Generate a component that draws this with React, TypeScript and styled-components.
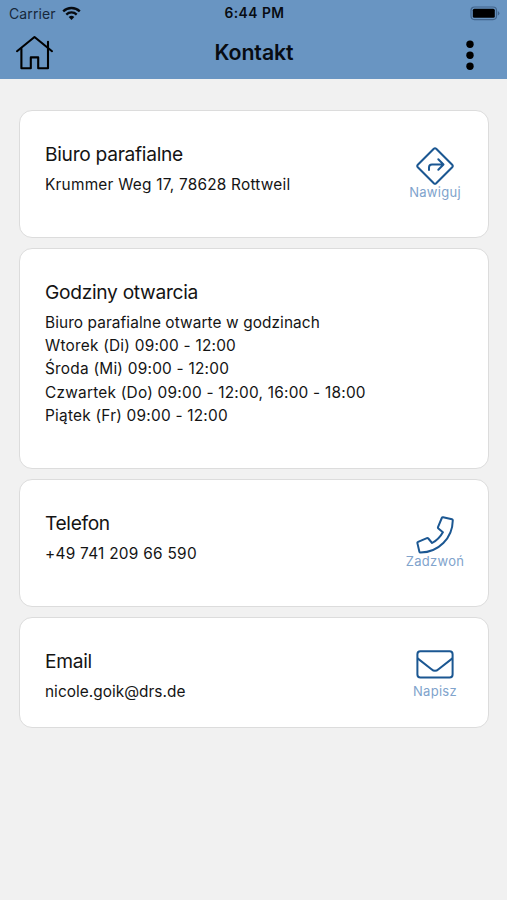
import React from "react";
import styled, { createGlobalStyle } from "styled-components";

const GlobalStyle = createGlobalStyle`
  * { box-sizing: border-box; }
  body {
    margin: 0;
    background: #f1f1f1;
    color: #141414;
    font-family: Inter, "Liberation Sans", sans-serif;
  }
`;

const Screen = styled.div`
  min-height: 900px;
  background: #f1f1f1;
`;

const Header = styled.header`
  height: 79px;
  background: #6995c2;
  color: #080c12;
`;

const StatusBar = styled.div`
  display: grid;
  grid-template-columns: 1fr auto 1fr;
  align-items: center;
  height: 27px;
  padding: 0 7px 0 9px;
`;

const Carrier = styled.div`
  display: flex;
  align-items: center;
  gap: 6px;
  font-size: 14px;
  line-height: 27px;
  letter-spacing: 0.1px;
  color: #17283b;
`;

const Clock = styled.time`
  font-size: 13.8px;
  line-height: 27px;
  font-weight: 600;
  letter-spacing: 0.5px;
`;

const BatterySlot = styled.div`
  display: flex;
  justify-content: flex-end;
`;

const NavBar = styled.div`
  display: grid;
  grid-template-columns: 1fr auto 1fr;
  align-items: start;
  height: 52px;
  padding: 0 32px 0 15px;
`;

const NavTitle = styled.h1`
  margin: 0 0 0 18px;
  font-size: 21.3px;
  line-height: 50px;
  font-weight: 600;
  letter-spacing: -0.1px;
`;

const IconButton = styled.button<{ $end?: boolean }>`
  display: flex;
  margin-top: ${(p) => (p.$end ? 12 : 8)}px;
  padding: 0;
  border: 0;
  background: none;
  color: #000;
  justify-self: ${(p) => (p.$end ? "end" : "start")};
`;

const CardList = styled.main`
  display: flex;
  flex-direction: column;
  gap: 10px;
  padding: 31px 18px 0 19px;
`;

const Card = styled.section<{ $height: number }>`
  display: flex;
  justify-content: space-between;
  height: ${(p) => p.$height}px;
  padding: 31px 22px 0 25px;
  border: 1px solid #dcdcdc;
  border-radius: 13px;
  background: #fff;
`;

const CardTitle = styled.h2<{ $tracking?: number }>`
  margin: 0 0 6px;
  font-size: 19.2px;
  line-height: 25px;
  font-weight: 400;
  letter-spacing: ${(p) => p.$tracking ?? -0.3}px;
`;

const Line = styled.p<{ $tracking?: number }>`
  margin: 0;
  font-size: 15.4px;
  line-height: 23.2px;
  letter-spacing: ${(p) => p.$tracking ?? 0.23}px;
  white-space: nowrap;
`;

const Action = styled.a<{ $top: number; $gap?: number }>`
  display: flex;
  flex-direction: column;
  align-items: center;
  gap: ${(p) => p.$gap ?? 0}px;
  width: 62px;
  margin-top: ${(p) => p.$top}px;
  color: #1b5792;
`;

const ActionLabel = styled.span`
  font-size: 13px;
  line-height: 14px;
  letter-spacing: 0.28px;
  color: #80a3cc;
`;

const WifiIcon = () => (
  <svg width="19" height="15" viewBox="0 0 19 15" fill="none" stroke="#070b10" strokeWidth="2.3">
    <path d="M1.2 5.4a11.8 11.8 0 0 1 16.6 0" />
    <path d="M4.3 8.6a7.4 7.4 0 0 1 10.4 0" />
    <path d="M9.5 14 6.7 11.1a4 4 0 0 1 5.6 0z" fill="#070b10" stroke="none" />
  </svg>
);

const BatteryIcon = () => (
  <svg width="30" height="15" viewBox="0 0 30 15">
    <rect x="1" y="1" width="25.5" height="12.6" rx="3.5" fill="none" stroke="#42658c" strokeWidth="1.2" />
    <rect x="2.8" y="2.8" width="22" height="9" rx="1.5" fill="#000" />
    <path d="M27.8 5v4.6q1.6-.7 1.6-2.3T27.8 5z" fill="#42658c" />
  </svg>
);

const HomeIcon = () => (
  <svg width="40" height="36" viewBox="0 0 40 36" fill="none" stroke="currentColor" strokeWidth="2.1" strokeLinecap="round" strokeLinejoin="round">
    <path d="M2 16.2 19.5 2 37 16.2" />
    <path d="M6.4 13.8v19.4h9.4V22.4h7.4v10.8H33V6.8M33 10v23" />
  </svg>
);

const MoreIcon = () => (
  <svg width="10" height="32" viewBox="0 0 10 32" fill="currentColor">
    <circle cx="5" cy="5.3" r="3.7" />
    <circle cx="5" cy="16.3" r="3.7" />
    <circle cx="5" cy="27.3" r="3.7" />
  </svg>
);

const NavigateIcon = () => (
  <svg width="38" height="38" viewBox="0 0 38 38" fill="none" stroke="currentColor" strokeWidth="2" strokeLinecap="round" strokeLinejoin="round">
    <path d="M17.8 1.8q1.2-1.1 2.4 0l16 16q1.1 1.2 0 2.4l-16 16q-1.2 1.1-2.4 0l-16-16q-1.1-1.2 0-2.4z" />
    <path d="M13 23v-2.5q0-3 3-3h11.3M22.3 12.3l5.2 5.2-5.2 5.2" />
  </svg>
);

const PhoneIcon = () => (
  <svg width="38" height="38" viewBox="0 0 38 38" fill="none" stroke="currentColor" strokeWidth="2" strokeLinejoin="round">
    <path d="M27.1 1.3 36 3.2q.8.2.8 1C36.5 22.2 22.6 36.3 4.5 36.6q-.9 0-1.1-.8L1.4 27.1q-.2-.9.7-1.3l8.8-3.7q.8-.3 1.4.4l3.8 4.5a28 28 0 0 0 10.8-10.8l-4.5-3.7q-.7-.6-.4-1.4L25.8 2q.4-.9 1.3-.7z" />
  </svg>
);

const MailIcon = () => (
  <svg width="38" height="29" viewBox="0 0 38 29" fill="none" stroke="currentColor" strokeWidth="2" strokeLinejoin="round">
    <rect x="1.4" y="1.2" width="35.2" height="26.4" rx="3" />
    <path d="M1.6 8.4 15.5 19.2q3.5 3.2 7 0L36.4 8.4" />
  </svg>
);

export default function App() {
  return (
    <Screen>
      <GlobalStyle />
      <Header>
        <StatusBar>
          <Carrier>
            Carrier
            <WifiIcon />
          </Carrier>
          <Clock>6:44 PM</Clock>
          <BatterySlot>
            <BatteryIcon />
          </BatterySlot>
        </StatusBar>
        <NavBar>
          <IconButton aria-label="Start">
            <HomeIcon />
          </IconButton>
          <NavTitle>Kontakt</NavTitle>
          <IconButton $end aria-label="Menu">
            <MoreIcon />
          </IconButton>
        </NavBar>
      </Header>
      <CardList>
        <Card $height={128}>
          <div>
            <CardTitle>Biuro parafialne</CardTitle>
            <Line>Krummer Weg 17, 78628 Rottweil</Line>
          </div>
          <Action $top={5}>
            <NavigateIcon />
            <ActionLabel>Nawiguj</ActionLabel>
          </Action>
        </Card>
        <Card $height={221}>
          <div>
            <CardTitle>Godziny otwarcia</CardTitle>
            <Line $tracking={0.09}>Biuro parafialne otwarte w godzinach</Line>
            <Line>Wtorek (Di) 09:00 - 12:00</Line>
            <Line>Środa (Mi) 09:00 - 12:00</Line>
            <Line>Czwartek (Do) 09:00 - 12:00, 16:00 - 18:00</Line>
            <Line>Piątek (Fr) 09:00 - 12:00</Line>
          </div>
        </Card>
        <Card $height={128}>
          <div>
            <CardTitle $tracking={-0.35}>Telefon</CardTitle>
            <Line $tracking={0.27}>+49 741 209 66 590</Line>
          </div>
          <Action $top={5}>
            <PhoneIcon />
            <ActionLabel>Zadzwoń</ActionLabel>
          </Action>
        </Card>
        <Card $height={111}>
          <div>
            <CardTitle>Email</CardTitle>
            <Line $tracking={0.03}>nicole.goik@drs.de</Line>
          </div>
          <Action $top={1} $gap={5}>
            <MailIcon />
            <ActionLabel>Napisz</ActionLabel>
          </Action>
        </Card>
      </CardList>
    </Screen>
  );
}
